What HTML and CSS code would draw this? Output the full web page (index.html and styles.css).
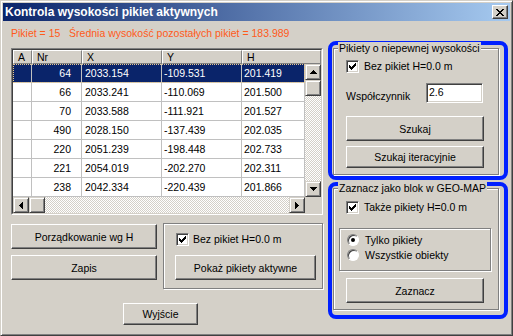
FILE: index.html
```html
<!DOCTYPE html>
<html>
<head>
<meta charset="utf-8">
<link rel="stylesheet" href="styles.css">
</head>
<body>
<div class="window">
  <div class="titlebar">
    <span class="title">Kontrola wysokości pikiet aktywnych</span>
    <span class="close">
      <svg width="8" height="7" viewBox="0 0 8 7" shape-rendering="crispEdges">
        <rect x="0" y="0" width="2" height="1"/><rect x="6" y="0" width="2" height="1"/>
        <rect x="1" y="1" width="2" height="1"/><rect x="5" y="1" width="2" height="1"/>
        <rect x="2" y="2" width="4" height="1"/>
        <rect x="3" y="3" width="2" height="1"/>
        <rect x="2" y="4" width="4" height="1"/>
        <rect x="1" y="5" width="2" height="1"/><rect x="5" y="5" width="2" height="1"/>
        <rect x="0" y="6" width="2" height="1"/><rect x="6" y="6" width="2" height="1"/>
      </svg>
    </span>
  </div>
  <div class="client">
    <div class="left">
      <div class="info">Pikiet = 15   Średnia wysokość pozostałych pikiet = 183.989</div>
      <div class="grid">
        <div class="grid-in">
          <div class="ghead">
            <div class="hc w-a">A</div>
            <div class="hc w-nr">Nr</div>
            <div class="hc w-x">X</div>
            <div class="hc w-y">Y</div>
            <div class="hc w-hh">H</div>
          </div>
          <div class="gmid">
            <div class="rows">
              <div class="row sel"><div class="c w-a"></div><div class="c w-nr nr">64</div><div class="c w-x">2033.154</div><div class="c w-y">-109.531</div><div class="c w-h">201.419</div></div>
              <div class="row"><div class="c w-a"></div><div class="c w-nr nr">66</div><div class="c w-x">2033.241</div><div class="c w-y">-110.069</div><div class="c w-h">201.500</div></div>
              <div class="row"><div class="c w-a"></div><div class="c w-nr nr">70</div><div class="c w-x">2033.588</div><div class="c w-y">-111.921</div><div class="c w-h">201.527</div></div>
              <div class="row"><div class="c w-a"></div><div class="c w-nr nr">490</div><div class="c w-x">2028.150</div><div class="c w-y">-137.439</div><div class="c w-h">202.035</div></div>
              <div class="row"><div class="c w-a"></div><div class="c w-nr nr">220</div><div class="c w-x">2051.239</div><div class="c w-y">-198.448</div><div class="c w-h">202.733</div></div>
              <div class="row"><div class="c w-a"></div><div class="c w-nr nr">221</div><div class="c w-x">2054.019</div><div class="c w-y">-202.270</div><div class="c w-h">202.311</div></div>
              <div class="row"><div class="c w-a"></div><div class="c w-nr nr">238</div><div class="c w-x">2042.334</div><div class="c w-y">-220.439</div><div class="c w-h">201.866</div></div>
              <div class="row"><div class="c w-a"></div><div class="c w-nr nr"></div><div class="c w-x"></div><div class="c w-y"></div><div class="c w-h"></div></div>
            </div>
            <div class="vscroll">
              <div class="sb">
                <svg width="7" height="4" viewBox="0 0 7 4" shape-rendering="crispEdges"><rect x="3" y="0" width="1" height="1"/><rect x="2" y="1" width="3" height="1"/><rect x="1" y="2" width="5" height="1"/><rect x="0" y="3" width="7" height="1"/></svg>
              </div>
              <div class="sb"></div>
              <div class="spacer"></div>
              <div class="sb">
                <svg width="7" height="4" viewBox="0 0 7 4" shape-rendering="crispEdges"><rect x="0" y="0" width="7" height="1"/><rect x="1" y="1" width="5" height="1"/><rect x="2" y="2" width="3" height="1"/><rect x="3" y="3" width="1" height="1"/></svg>
              </div>
            </div>
          </div>
          <div class="gbot">
            <div class="hscroll">
              <div class="sb">
                <svg width="4" height="7" viewBox="0 0 4 7" shape-rendering="crispEdges"><rect x="3" y="0" width="1" height="7"/><rect x="2" y="1" width="1" height="5"/><rect x="1" y="2" width="1" height="3"/><rect x="0" y="3" width="1" height="1"/></svg>
              </div>
              <div class="sb"></div>
              <div class="spacer"></div>
              <div class="sb">
                <svg width="4" height="7" viewBox="0 0 4 7" shape-rendering="crispEdges"><rect x="0" y="0" width="1" height="7"/><rect x="1" y="1" width="1" height="5"/><rect x="2" y="2" width="1" height="3"/><rect x="3" y="3" width="1" height="1"/></svg>
              </div>
            </div>
            <div class="corner"></div>
          </div>
        </div>
      </div>
      <div class="lower">
        <div class="btncol">
          <button class="btn b-wide">Porządkowanie wg H</button>
          <button class="btn b-wide">Zapis</button>
        </div>
        <div class="group plain">
          <div class="chk">
            <span class="box"><svg width="7" height="7" viewBox="0 0 7 7" shape-rendering="crispEdges"><rect x="6" y="0" width="1" height="1"/><rect x="5" y="1" width="2" height="1"/><rect x="0" y="2" width="1" height="1"/><rect x="4" y="2" width="3" height="1"/><rect x="0" y="3" width="2" height="1"/><rect x="3" y="3" width="3" height="1"/><rect x="0" y="4" width="5" height="1"/><rect x="1" y="5" width="3" height="1"/><rect x="2" y="6" width="1" height="1"/></svg></span>
            <span>Bez pikiet H=0.0 m</span>
          </div>
          <button class="btn b-show">Pokaż pikiety aktywne</button>
        </div>
      </div>
      <button class="btn b-exit">Wyjście</button>
    </div>
    <div class="right">
      <div class="blue b1">
        <div class="group g1">
          <span class="legend">Pikiety o niepewnej wysokości</span>
          <div class="chk chk-r1">
            <span class="box"><svg width="7" height="7" viewBox="0 0 7 7" shape-rendering="crispEdges"><rect x="6" y="0" width="1" height="1"/><rect x="5" y="1" width="2" height="1"/><rect x="0" y="2" width="1" height="1"/><rect x="4" y="2" width="3" height="1"/><rect x="0" y="3" width="2" height="1"/><rect x="3" y="3" width="3" height="1"/><rect x="0" y="4" width="5" height="1"/><rect x="1" y="5" width="3" height="1"/><rect x="2" y="6" width="1" height="1"/></svg></span>
            <span>Bez pikiet H=0.0 m</span>
          </div>
          <div class="coef">
            <span class="coef-label">Współczynnik</span>
            <span class="edit">2.6</span>
          </div>
          <button class="btn b-side b-search">Szukaj</button>
          <button class="btn b-side b-iter">Szukaj iteracyjnie</button>
        </div>
      </div>
      <div class="blue b2">
        <div class="group g2">
          <span class="legend">Zaznacz jako blok w GEO-MAP</span>
          <div class="chk chk-r2">
            <span class="box"><svg width="7" height="7" viewBox="0 0 7 7" shape-rendering="crispEdges"><rect x="6" y="0" width="1" height="1"/><rect x="5" y="1" width="2" height="1"/><rect x="0" y="2" width="1" height="1"/><rect x="4" y="2" width="3" height="1"/><rect x="0" y="3" width="2" height="1"/><rect x="3" y="3" width="3" height="1"/><rect x="0" y="4" width="5" height="1"/><rect x="1" y="5" width="3" height="1"/><rect x="2" y="6" width="1" height="1"/></svg></span>
            <span>Także pikiety H=0.0 m</span>
          </div>
          <div class="group radios">
            <div class="radio"><span class="dot on"></span><span>Tylko pikiety</span></div>
            <div class="radio"><span class="dot"></span><span>Wszystkie obiekty</span></div>
          </div>
          <button class="btn b-side b-mark">Zaznacz</button>
        </div>
      </div>
    </div>
  </div>
</div>
</body>
</html>
```
FILE: styles.css
```css
* { box-sizing: border-box; }
html, body { margin: 0; padding: 0; }
body {
  width: 513px; height: 336px; overflow: hidden;
  background: #d4d0c8;
  font-family: "Liberation Sans", Arial, sans-serif;
  font-size: 10.5px; color: #000;
}
.window {
  width: 513px; height: 336px;
  border: 1px solid; border-color: #d4d0c8 #404040 #404040 #d4d0c8;
  box-shadow: inset 1px 1px #fff, inset -1px -1px #808080;
  padding: 2px;
  background: #d4d0c8;
  display: flex; flex-direction: column;
}
.titlebar {
  height: 18px; flex: none;
  background: linear-gradient(to right, #0a246a, #a6caf0);
  display: flex; align-items: center; justify-content: space-between;
  padding: 0 2px 0 2px;
}
.title { color: #fff; font-weight: bold; font-size: 12px; }
.close {
  width: 16px; height: 14px;
  background: #d4d0c8;
  border: 1px solid; border-color: #fff #404040 #404040 #fff;
  box-shadow: inset -1px -1px #808080;
  display: flex; align-items: center; justify-content: center;
}
.client { display: flex; gap: 4px; padding-left: 8px; flex: 1; }
.left { width: 313px; padding-top: 6px; display: flex; flex-direction: column; align-items: flex-start; }
.info { color: #ff5a1a; line-height: 13px; height: 13px; white-space: pre; margin-bottom: 8px; }

.grid { width: 312px; height: 167px; border: 1px solid; border-color: #808080 #fff #fff #808080; }
.grid-in {
  height: 100%;
  border: 1px solid; border-color: #404040 #d4d0c8 #d4d0c8 #404040;
  background: #fff;
  display: flex; flex-direction: column;
}
.ghead { display: flex; height: 14px; background: #d4d0c8; flex: none; }
.hc {
  height: 14px; flex: none;
  border: 1px solid; border-color: #fff #808080 #808080 #fff;
  padding-left: 4px; line-height: 12px;
}
.w-a { width: 19px; }
.w-nr { width: 50px; }
.w-x { width: 80px; }
.w-y { width: 80px; }
.w-hh { width: 79px; }
.w-h { width: 63px; }
.gmid { display: flex; height: 133px; flex: none; }
.rows { width: 292px; overflow: hidden; }
.row { display: flex; height: 19px; }
.c {
  height: 19px; flex: none;
  border-right: 1px solid #c0c0c0; border-bottom: 1px solid #c0c0c0;
  line-height: 18px; padding-left: 2px;
  white-space: nowrap; overflow: hidden;
}
.c.w-x { padding-left: 3px; }
.c.nr { text-align: right; padding-right: 10px; padding-left: 0; }
.row.sel { background: #0a246a; color: #fff; outline: 1px dotted #e8c890; outline-offset: -1px; }

.vscroll, .hscroll {
  display: flex;
  background: repeating-conic-gradient(#fff 0 25%, #d4d0c8 0 50%) 0 0 / 2px 2px;
}
.vscroll { width: 16px; flex-direction: column; }
.hscroll { width: 292px; }
.spacer { flex: 1; }
.sb {
  width: 16px; height: 16px; flex: none;
  background: #d4d0c8;
  border: 1px solid; border-color: #d4d0c8 #404040 #404040 #d4d0c8;
  box-shadow: inset 1px 1px #fff, inset -1px -1px #808080;
  display: flex; align-items: center; justify-content: center;
}
.gbot { display: flex; height: 16px; flex: none; }
.corner { width: 16px; background: #d4d0c8; }

.btn {
  font: inherit; color: #000;
  background: #d4d0c8;
  border: 1px solid; border-color: #fff #404040 #404040 #fff;
  box-shadow: inset -1px -1px #808080, inset 1px 1px #d4d0c8;
  padding: 0; height: 25px; display: block; flex: none;
}
.lower { display: flex; margin-top: 8px; }
.btncol { width: 146px; padding-top: 1px; display: flex; flex-direction: column; gap: 6px; }
.b-wide { width: 146px; }
.group { border: 1px solid #808080; box-shadow: inset 1px 1px #fff, 1px 1px #fff; }
.plain { margin-left: 6px; width: 160px; height: 66px; padding: 9px 0 0 11px; }
.b-show { width: 141px; margin-top: 9px; }
.b-exit { width: 75px; height: 22px; margin: 14px 0 0 112px; }

.chk { display: flex; align-items: center; gap: 5px; height: 13px; line-height: 13px; }
.plain .chk { margin-left: 1px; gap: 4px; }
.box {
  width: 13px; height: 13px; flex: none;
  background: #fff;
  border: 1px solid; border-color: #808080 #fff #fff #808080;
  box-shadow: inset 1px 1px #404040, inset -1px -1px #d4d0c8;
  display: flex; align-items: center; justify-content: center;
}

.right { width: 180px; padding-top: 20px; display: flex; flex-direction: column; gap: 2px; }
.blue { border: 4px solid #0020ff; border-radius: 8px; }
.b1 { height: 139px; padding: 3px 0 0 1px; }
.b2 { height: 137px; padding: 2px 0 0 1px; }
.g1 { width: 166px; height: 127px; }
.g2 { width: 166px; height: 122px; }
.legend {
  display: block; width: fit-content;
  margin: -7px 0 0 4px; padding: 0 1px;
  background: #d4d0c8; line-height: 13px;
}
.chk-r1 { margin: 5px 0 0 12px; }
.chk-r2 { margin: 6px 0 0 12px; }
.coef { display: flex; align-items: center; margin: 10px 0 0 12px; height: 20px; }
.coef-label { width: 80px; padding-top: 5px; }
.edit {
  width: 57px; height: 20px;
  background: #fff;
  border: 1px solid; border-color: #808080 #fff #fff #808080;
  box-shadow: inset 1px 1px #404040, inset -1px -1px #d4d0c8;
  padding-left: 2px; line-height: 17px;
}
.b-side { width: 138px; margin-left: 12px; }
.b-search { margin-top: 13px; }
.b-iter { margin-top: 5px; height: 22px; }
.radios { width: 152px; height: 43px; margin: 14px 0 0 5px; padding: 3px 0 0 7px; }
.radio { display: flex; align-items: center; gap: 6px; height: 15px; }
.dot {
  width: 12px; height: 12px; border-radius: 50%; flex: none;
  background: #fff;
  border: 1px solid; border-color: #808080 #fff #fff #808080;
  box-shadow: inset 1px 1px #404040;
  display: flex; align-items: center; justify-content: center;
}
.dot.on::after { content: ""; width: 4px; height: 4px; border-radius: 50%; background: #000; }
.b-mark { margin-top: 7px; }
```
